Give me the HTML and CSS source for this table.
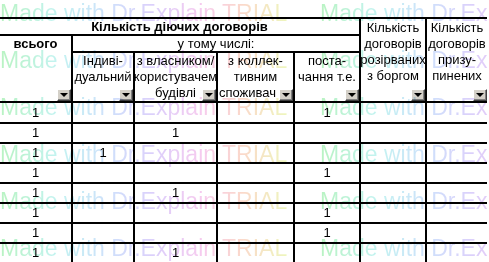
FILE: index.html
```html
<!DOCTYPE html>
<html lang="uk">
<head>
<meta charset="utf-8">
<title>Кількість діючих договорів</title>
<link rel="stylesheet" href="styles.css">
</head>
<body>
<div class="sheet">
  <div class="grid">
    <div class="c b top">Кількість діючих договорів</div>
    <div class="c tall c6"><span class="t">Кількість<br>договорів<br>розірваних<br>з боргом</span><span class="dd"></span></div>
    <div class="c tall c7"><span class="t">Кількість<br>договорів<br>призу-<br>пинених</span><span class="dd"></span></div>
    <div class="c b total"><span class="t">всього</span><span class="dd"></span></div>
    <div class="c incl">у тому числі:</div>
    <div class="c sub s2"><span class="t">Індиві-<br>дуальний</span><span class="dd"></span></div>
    <div class="c sub s3"><span class="t">з власником/<br>користувачем<br>будівлі</span><span class="dd"></span></div>
    <div class="c sub s4"><span class="t">з коллек-<br>тивним<br><span class="shift">споживач</span></span><span class="dd"></span></div>
    <div class="c sub s5"><span class="t">поста-<br>чання т.е.</span><span class="dd"></span></div>

    <div class="c d">1</div><div class="c d"></div><div class="c d"></div><div class="c d"></div><div class="c d">1</div><div class="c d"></div><div class="c d"></div>
    <div class="c d">1</div><div class="c d"></div><div class="c d">1</div><div class="c d"></div><div class="c d"></div><div class="c d"></div><div class="c d"></div>
    <div class="c d">1</div><div class="c d">1</div><div class="c d"></div><div class="c d"></div><div class="c d"></div><div class="c d"></div><div class="c d"></div>
    <div class="c d">1</div><div class="c d"></div><div class="c d"></div><div class="c d"></div><div class="c d">1</div><div class="c d"></div><div class="c d"></div>
    <div class="c d">1</div><div class="c d"></div><div class="c d">1</div><div class="c d"></div><div class="c d"></div><div class="c d"></div><div class="c d"></div>
    <div class="c d">1</div><div class="c d"></div><div class="c d"></div><div class="c d"></div><div class="c d">1</div><div class="c d"></div><div class="c d"></div>
    <div class="c d">1</div><div class="c d"></div><div class="c d"></div><div class="c d"></div><div class="c d">1</div><div class="c d"></div><div class="c d"></div>
    <div class="c d">1</div><div class="c d"></div><div class="c d">1</div><div class="c d"></div><div class="c d"></div><div class="c d"></div><div class="c d"></div>
  </div>
  <div class="wm" aria-hidden="true">
    <div class="wm-line"><span class="slot"><span class="ph">Made with Dr.Explain TRIAL</span></span><span class="slot"><span class="ph">Made with Dr.Explain TRIAL</span></span></div>
    <div class="wm-line"><span class="slot"><span class="ph">Made with Dr.Explain TRIAL</span></span><span class="slot"><span class="ph">Made with Dr.Explain TRIAL</span></span></div>
    <div class="wm-line"><span class="slot"><span class="ph">Made with Dr.Explain TRIAL</span></span><span class="slot"><span class="ph">Made with Dr.Explain TRIAL</span></span></div>
    <div class="wm-line"><span class="slot"><span class="ph">Made with Dr.Explain TRIAL</span></span><span class="slot"><span class="ph">Made with Dr.Explain TRIAL</span></span></div>
    <div class="wm-line"><span class="slot"><span class="ph">Made with Dr.Explain TRIAL</span></span><span class="slot"><span class="ph">Made with Dr.Explain TRIAL</span></span></div>
    <div class="wm-line"><span class="slot"><span class="ph">Made with Dr.Explain TRIAL</span></span><span class="slot"><span class="ph">Made with Dr.Explain TRIAL</span></span></div>
  </div>
</div>
</body>
</html>
```

FILE: styles.css
```css
html, body {
  margin: 0;
  padding: 0;
  background: #fff;
}
body {
  overflow: hidden;
  font-family: "Liberation Sans", Arial, sans-serif;
  font-size: 13px;
  color: #000;
}
.sheet {
  position: relative;
  width: 489px;
  height: 262px;
  overflow: hidden;
}
.grid {
  display: grid;
  grid-template-columns: 71px 60px 81px 75px 64px 64px 60px;
  grid-template-rows: 15px 15px 48px 19px repeat(7, 18px);
  gap: 2px;
  background: #000;
  padding-top: 2px;
  margin-top: 17px;
  width: max-content;
}
.c {
  background: #fff;
  position: relative;
  text-align: center;
  line-height: 16px;
  white-space: nowrap;
}
.t {
  display: block;
  margin: 0 -8px;
}
.b { font-weight: bold; }
.top {
  grid-column: 1 / 6;
  grid-row: 1;
  line-height: 15px;
}
.c6 { grid-column: 6; grid-row: 1 / 4; padding-top: 1px; }
.c7 { grid-column: 7; grid-row: 1 / 4; padding-top: 1px; }
.total { grid-column: 1; grid-row: 2 / 4; }
.incl { grid-column: 2 / 6; grid-row: 2; line-height: 15px; }
.sub { grid-row: 3; }
.s2 { grid-column: 2; }
.s3 { grid-column: 3; }
.s4 { grid-column: 4; }
.s5 { grid-column: 5; }
.shift { padding-right: 16px; }
.d {
  display: flex;
  align-items: center;
  justify-content: center;
}
.dd {
  position: absolute;
  right: 0;
  bottom: 0;
  width: 14px;
  height: 12px;
  box-sizing: border-box;
  background: #d4d0c8;
  border: 1px solid;
  border-color: #fff #404040 #404040 #fff;
  box-shadow: inset -1px -1px 0 #808080;
}
.dd::after {
  content: "";
  position: absolute;
  left: 2px;
  top: 3px;
  border-left: 4px solid transparent;
  border-right: 4px solid transparent;
  border-top: 4px solid #000;
}
.wm {
  position: absolute;
  left: 0;
  top: -10px;
  mix-blend-mode: multiply;
  pointer-events: none;
  font-family: "Liberation Sans", Arial, sans-serif;
  font-size: 23px;
  line-height: 47px;
}
.wm-line {
  display: flex;
  white-space: nowrap;
}
.slot {
  flex: none;
  width: 320px;
}
.ph {
  background: linear-gradient(90deg, #b9f3c2 0%, #c3f3f1 20%, #cfe0fb 38%, #dccffb 54%, #f6cbef 70%, #fbd8cb 84%, #eef6bd 100%);
  -webkit-background-clip: text;
  background-clip: text;
  color: transparent;
}
```
